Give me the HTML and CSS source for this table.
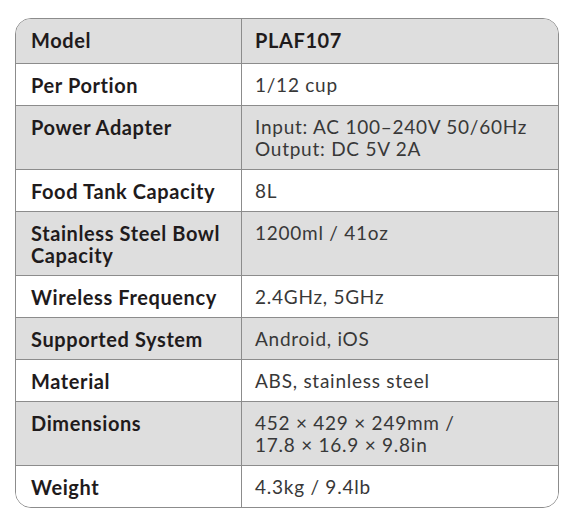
FILE: index.html
```html
<!DOCTYPE html>
<html>
<head>
<meta charset="utf-8">
<link rel="stylesheet" href="styles.css">
</head>
<body>
<div class="spec">
  <div class="row shade head"><div class="k">Model</div><div class="v vb">PLAF107</div></div>
  <div class="row"><div class="k">Per Portion</div><div class="v">1/12 cup</div></div>
  <div class="row shade"><div class="k">Power Adapter</div><div class="v">Input: AC 100–240V 50/60Hz<br>Output: DC 5V 2A</div></div>
  <div class="row"><div class="k">Food Tank Capacity</div><div class="v">8L</div></div>
  <div class="row shade"><div class="k">Stainless Steel Bowl<br>Capacity</div><div class="v">1200ml / 41oz</div></div>
  <div class="row"><div class="k">Wireless Frequency</div><div class="v">2.4GHz, 5GHz</div></div>
  <div class="row shade"><div class="k">Supported System</div><div class="v">Android, iOS</div></div>
  <div class="row"><div class="k">Material</div><div class="v">ABS, stainless steel</div></div>
  <div class="row shade"><div class="k">Dimensions</div><div class="v">452 × 429 × 249mm /<br>17.8 × 16.9 × 9.8in</div></div>
  <div class="row"><div class="k">Weight</div><div class="v">4.3kg / 9.4lb</div></div>
</div>
</body>
</html>
```
FILE: styles.css
```css
html, body {
  margin: 0;
  padding: 0;
  background: #ffffff;
}
body {
  padding: 18px 0 0 15px;
  font-family: "Lato", "Liberation Sans", sans-serif;
}
.spec {
  width: 542px;
  border: 1px solid #8c8c8c;
  border-radius: 16px;
  overflow: hidden;
}
.row {
  display: grid;
  grid-template-columns: 226px 1fr;
  border-top: 1px solid #8c8c8c;
  background: #ffffff;
}
.row:first-child {
  border-top: none;
}
.row.shade {
  background: #dedede;
}
.k, .v {
  padding: 9.5px 10px 9.5px 15px;
  line-height: 22px;
}
.k {
  border-right: 1px solid #8c8c8c;
  font-weight: 700;
  font-size: 20px;
  letter-spacing: 0.6px;
  color: #1f1b1c;
}
.v {
  padding-left: 13px;
  font-weight: 400;
  font-size: 19px;
  letter-spacing: 0.75px;
  color: #383838;
}
.v.vb {
  font-weight: 700;
  font-size: 20px;
  letter-spacing: 0.6px;
  color: #1f1b1c;
}
.head .k, .head .v {
  padding-top: 10px;
  padding-bottom: 12px;
}
```
